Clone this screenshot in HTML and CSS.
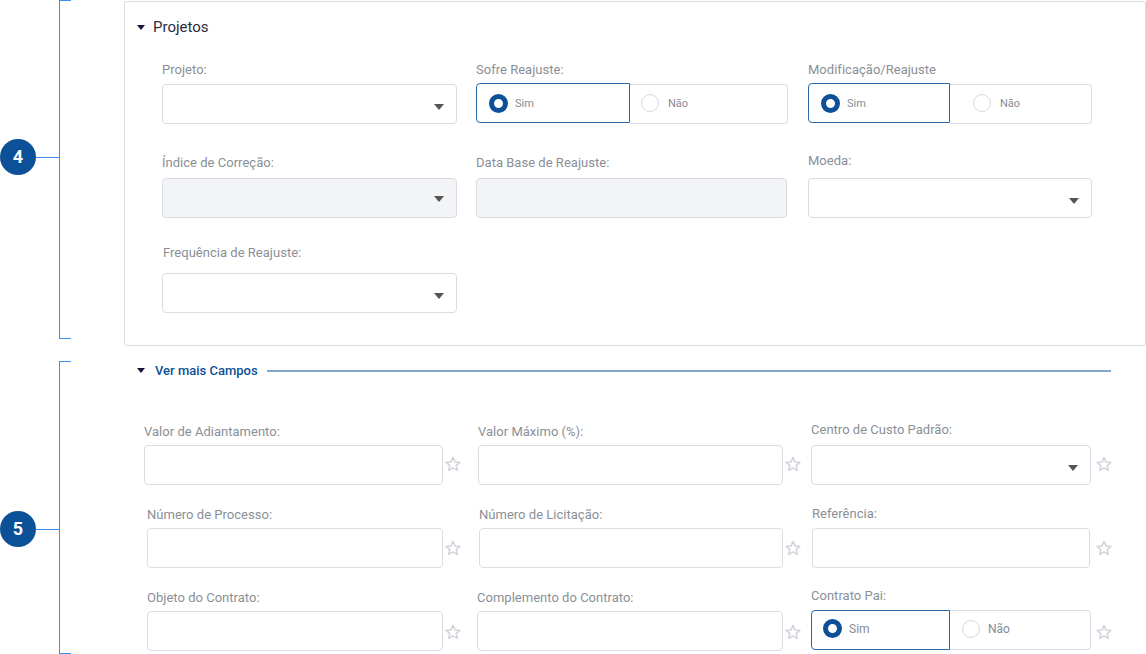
FILE: index.html

```html
<!DOCTYPE html>
<html lang="pt">

<head>
  <meta charset="UTF-8">
  <title>Projetos</title>
  <link rel="stylesheet" href="styles.css">
</head>

<body>
  <svg class="defs" width="0" height="0">
    <symbol id="star" viewBox="0 0 16 16">
      <path d="M8 1.4l2 4.5 4.9.5-3.700 3.200 1.100 4.800L8 11.900l-4.300 2.500 1.100-4.800L1.100 6.400l4.900-.5z" fill="none" stroke="#d0d4da" stroke-width="1.500" stroke-linejoin="round" />
    </symbol>
  </svg>

  <div class="page">
    <!-- bloco 4 -->
    <div class="callout callout-4"><span class="badge">4</span></div>
    <section class="panel">
      <div class="panel-title"><i class="caret"></i>Projetos</div>

      <div class="row row-first">
        <div class="field a1">
          <label>Projeto:</label>
          <div class="control select"><i class="arrow"></i></div>
        </div>
        <div class="field a2">
          <label>Sofre Reajuste:</label>
          <div class="radios">
            <div class="opt on"><i class="dot"></i>Sim</div>
            <div class="opt off"><i class="dot"></i>Não</div>
          </div>
        </div>
        <div class="field a3">
          <label>Modificação/Reajuste</label>
          <div class="radios">
            <div class="opt on a3-sim"><i class="dot"></i>Sim</div>
            <div class="opt off a3-nao"><i class="dot"></i>Não</div>
          </div>
        </div>
      </div>

      <div class="row row-second">
        <div class="field a1">
          <label>Índice de Correção:</label>
          <div class="control select disabled lifted"><i class="arrow"></i></div>
        </div>
        <div class="field b2">
          <label>Data Base de Reajuste:</label>
          <div class="control disabled"></div>
        </div>
        <div class="field b3">
          <label class="far">Moeda:</label>
          <div class="control select"><i class="arrow"></i></div>
        </div>
      </div>

      <div class="row row-third">
        <div class="field a1">
          <label class="farther">Frequência de Reajuste:</label>
          <div class="control select"><i class="arrow"></i></div>
        </div>
      </div>
    </section>

    <!-- bloco 5 -->
    <div class="callout callout-5"><span class="badge">5</span></div>
    <section class="more">
      <div class="more-title"><i class="caret"></i><span>Ver mais Campos</span><b class="rule"></b></div>

      <div class="line line-first">
        <div class="cell c1">
          <label>Valor de Adiantamento:</label>
          <div class="cell-box"><div class="control"></div><svg class="star"><use href="#star" /></svg></div>
        </div>
        <div class="cell c2">
          <label>Valor Máximo (%):</label>
          <div class="cell-box"><div class="control"></div><svg class="star"><use href="#star" /></svg></div>
        </div>
        <div class="cell c3">
          <label class="far">Centro de Custo Padrão:</label>
          <div class="cell-box"><div class="control select"><i class="arrow"></i></div><svg class="star"><use href="#star" /></svg></div>
        </div>
      </div>

      <div class="line line-second">
        <div class="cell d1">
          <label>Número de Processo:</label>
          <div class="cell-box"><div class="control"></div><svg class="star"><use href="#star" /></svg></div>
        </div>
        <div class="cell d2">
          <label>Número de Licitação:</label>
          <div class="cell-box"><div class="control"></div><svg class="star"><use href="#star" /></svg></div>
        </div>
        <div class="cell d3">
          <label class="near">Referência:</label>
          <div class="cell-box"><div class="control"></div><svg class="star"><use href="#star" /></svg></div>
        </div>
      </div>

      <div class="line line-third">
        <div class="cell d1">
          <label>Objeto do Contrato:</label>
          <div class="cell-box"><div class="control"></div><svg class="star"><use href="#star" /></svg></div>
        </div>
        <div class="cell e2">
          <label>Complemento do Contrato:</label>
          <div class="cell-box"><div class="control"></div><svg class="star"><use href="#star" /></svg></div>
        </div>
        <div class="cell c3 up">
          <label class="near">Contrato Pai:</label>
          <div class="cell-box">
            <div class="radios flat">
              <div class="opt on e3-sim"><i class="dot"></i>Sim</div>
              <div class="opt off e3-nao"><i class="dot"></i>Não</div>
            </div>
            <svg class="star"><use href="#star" /></svg>
          </div>
        </div>
      </div>
    </section>
  </div>
</body>

</html>
```

FILE: styles.css

```css
* {
  margin: 0;
  padding: 0;
  box-sizing: border-box;
}

body {
  background: #fff;
  font-family: Roboto, "Liberation Sans", sans-serif;
  overflow: hidden;
}

.defs {
  position: absolute;
}

.page {
  position: relative;
  height: 654px;
  padding: 1px 0 0 124px;
}

/* marcacoes azuis da esquerda */
.callout {
  position: absolute;
  left: 59px;
  width: 12px;
  border: 1px solid #3a8cf0;
  border-right: 0;
}

.callout-4 {
  top: 0;
  height: 339px;
}

.callout-5 {
  top: 361px;
  height: 293px;
}

.callout::before {
  content: "";
  position: absolute;
  left: -24px;
  top: 50%;
  width: 24px;
  height: 1px;
  background: #3a8cf0;
}

.callout-4::before {
  margin-top: -13px;
}

.callout-5::before {
  margin-top: 21px;
}

.badge {
  position: absolute;
  left: -60px;
  top: 50%;
  width: 36px;
  height: 36px;
  border-radius: 50%;
  background: #0c5097;
  color: #fff;
  font-size: 18px;
  font-weight: 700;
  line-height: 36px;
  text-align: center;
}

.callout-4 .badge {
  margin-top: -31px;
}

.callout-5 .badge {
  margin-top: 3px;
}

/* painel */
.panel {
  width: 1022px;
  height: 345px;
  padding: 15px 0 0 37px;
  border: 1px solid #d8dbe0;
  border-radius: 3px;
}

.panel-title {
  display: flex;
  align-items: center;
  height: 20px;
  margin-left: -25px;
  color: #2b2d42;
  font-size: 15px;
}

.caret {
  width: 0;
  height: 0;
  margin-right: 8px;
  border-left: 4.5px solid transparent;
  border-right: 4.5px solid transparent;
  border-top: 5px solid #14143a;
}

.row {
  display: flex;
  align-items: flex-end;
}

.row-first {
  margin-top: 25px;
}

.row-second {
  margin-top: 29px;
}

.row-third {
  margin-top: 27px;
}

label {
  display: block;
  height: 16px;
  margin-bottom: 5px;
  color: #8a8f97;
  font-size: 13px;
  letter-spacing: 0.02px;
  line-height: 16px;
  white-space: nowrap;
}

label.far {
  margin-bottom: 7px;
}

label.near {
  margin-bottom: 6px;
}

.row .field label {
  margin-bottom: 6px;
}

.row-second .field label {
  margin-bottom: 7px;
}

.row-second .field label.far {
  margin-bottom: 9px;
}

.row-third .field label.farther {
  margin-bottom: 12px;
  margin-left: 1px;
}

.a1 {
  width: 295px;
}

.a2 {
  width: 312px;
  margin-left: 19px;
}

.a3 {
  width: 284px;
  margin-left: 20px;
}

.b2 {
  width: 311px;
  margin-left: 19px;
}

.b3 {
  width: 284px;
  margin-left: 21px;
}

.control {
  width: 100%;
  height: 40px;
  border: 1px solid #d9dde3;
  border-radius: 4px;
  background: #fff;
}

.select {
  display: flex;
  align-items: center;
  justify-content: flex-end;
  padding: 5px 12px 0 0;
}

.select.lifted {
  padding-top: 2px;
}

.disabled {
  background: #f3f4f6;
}

.arrow {
  width: 0;
  height: 0;
  border-left: 5.5px solid transparent;
  border-right: 5.5px solid transparent;
  border-top: 6px solid #555;
}

/* sim / nao */
.radios {
  display: flex;
  height: 40px;
  color: #868c94;
  font-size: 11px;
}

.opt {
  display: flex;
  align-items: center;
  height: 40px;
  border: 1px solid #d9dde3;
  background: #fff;
}

.opt.on {
  width: 154px;
  margin-top: -1px;
  padding-left: 12px;
  border-color: #2a69a8;
  border-radius: 4px 0 0 4px;
}

.opt.off {
  flex: 1;
  padding: 0 0 2px 11px;
  border-left: 0;
  border-radius: 0 4px 4px 0;
}

.dot {
  flex: none;
  width: 18px;
  height: 18px;
  margin-right: 9px;
  border: 1px solid #d6d9de;
  border-radius: 50%;
}

.on .dot {
  width: 19px;
  height: 19px;
  margin-right: 7px;
  border: 5px solid #0c5097;
}

.opt.a3-sim {
  width: 142px;
}

.opt.a3-nao {
  padding-left: 23px;
}

.radios.flat {
  flex: none;
  width: 280px;
  font-size: 12px;
}

.flat .opt.on {
  margin-top: 0;
}

.opt.e3-sim {
  width: 139px;
  padding: 0 0 3px 11px;
}

.opt.e3-nao {
  padding: 0 0 2px 12px;
}

.e3-nao .dot {
  margin-right: 8px;
}

/* ver mais campos */
.more {
  padding-top: 15px;
}

.more-title {
  display: flex;
  align-items: center;
  width: 974px;
  height: 18px;
  margin-left: 13px;
  color: #0c5097;
  font-size: 13px;
  font-weight: 500;
}

.more-title .caret {
  margin-right: 10px;
}

.rule {
  flex: 1;
  height: 2px;
  margin: 2px 0 0 9px;
  background: #84a6cc;
}

.line {
  display: flex;
  align-items: flex-end;
  margin-left: 20px;
}

.line-first {
  margin-top: 43px;
}

.line-second {
  margin-top: 21px;
}

.line-third {
  margin-top: 20px;
}

.cell-box {
  display: flex;
  align-items: center;
}

.cell .control {
  flex: none;
}

.star {
  flex: none;
  width: 16px;
  height: 16px;
  margin-left: 2px;
}

.line-first .star {
  margin-top: -2px;
}

.line-third .star {
  margin-top: 2px;
}

.c1 .control {
  width: 299px;
}

.c2 {
  margin-left: 17px;
}

.c2 .control {
  width: 305px;
}

.c3 {
  margin-left: 10px;
}

.c3 .control {
  width: 280px;
}

.c3 .star {
  margin-left: 5px;
}

.d1 {
  margin-left: 3px;
}

.d1 .control {
  width: 296px;
}

.d2 {
  margin-left: 18px;
}

.d2 .control {
  width: 304px;
}

.d3 {
  margin-left: 11px;
}

.d3 .control {
  width: 278px;
}

.d3 .star {
  margin-left: 6px;
}

.e2 {
  margin-left: 16px;
}

.e2 .control {
  width: 306px;
}

.up {
  margin-bottom: 1px;
}

.up .star {
  margin-top: 4px;
}
```
